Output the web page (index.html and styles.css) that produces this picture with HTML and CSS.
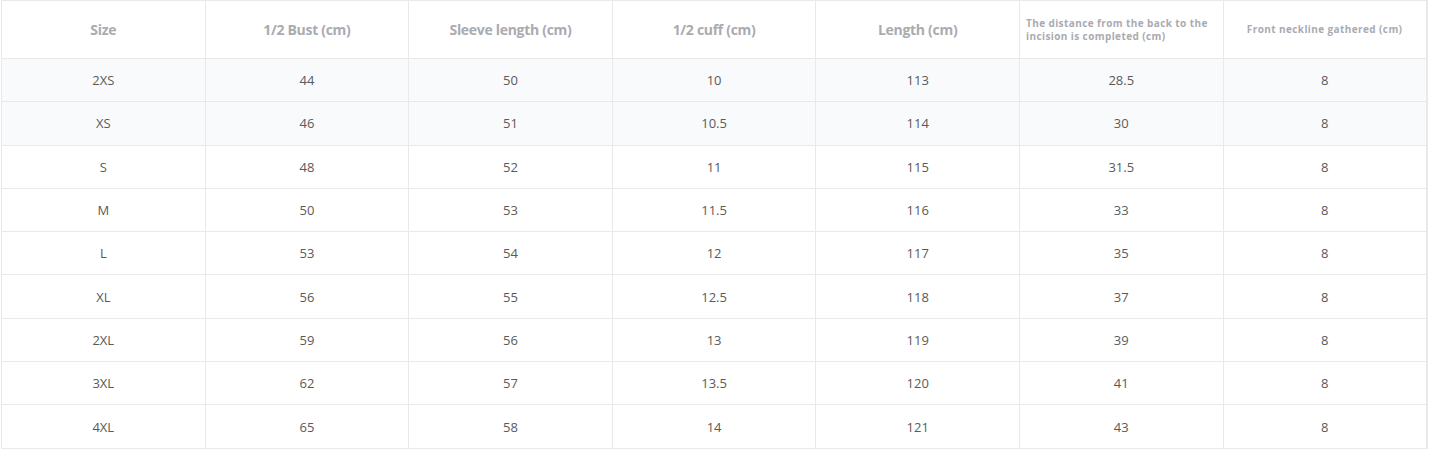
FILE: index.html
```html
<!DOCTYPE html>
<html>
<head>
<meta charset="utf-8">
<link rel="stylesheet" href="styles.css">
</head>
<body>
<table class="size-table">
  <colgroup>
    <col class="c"><col class="c"><col class="c"><col class="c"><col class="c"><col class="c"><col class="c">
  </colgroup>
  <thead>
    <tr>
      <th>Size</th>
      <th>1/2 Bust (cm)</th>
      <th>Sleeve length (cm)</th>
      <th>1/2 cuff (cm)</th>
      <th>Length (cm)</th>
      <th class="small left">The distance from the back to the incision is completed (cm)</th>
      <th class="small">Front neckline gathered (cm)</th>
    </tr>
  </thead>
  <tbody>
    <tr class="shade"><td>2XS</td><td>44</td><td>50</td><td>10</td><td>113</td><td>28.5</td><td>8</td></tr>
    <tr class="shade"><td>XS</td><td>46</td><td>51</td><td>10.5</td><td>114</td><td>30</td><td>8</td></tr>
    <tr><td>S</td><td>48</td><td>52</td><td>11</td><td>115</td><td>31.5</td><td>8</td></tr>
    <tr><td>M</td><td>50</td><td>53</td><td>11.5</td><td>116</td><td>33</td><td>8</td></tr>
    <tr><td>L</td><td>53</td><td>54</td><td>12</td><td>117</td><td>35</td><td>8</td></tr>
    <tr><td>XL</td><td>56</td><td>55</td><td>12.5</td><td>118</td><td>37</td><td>8</td></tr>
    <tr><td>2XL</td><td>59</td><td>56</td><td>13</td><td>119</td><td>39</td><td>8</td></tr>
    <tr><td>3XL</td><td>62</td><td>57</td><td>13.5</td><td>120</td><td>41</td><td>8</td></tr>
    <tr><td>4XL</td><td>65</td><td>58</td><td>14</td><td>121</td><td>43</td><td>8</td></tr>
  </tbody>
</table>
</body>
</html>
```
FILE: styles.css
```css
html, body {
  margin: 0;
  padding: 0;
  background: #ffffff;
}
body {
  padding: 0 0 0 1px;
  font-family: "Open Sans", "Liberation Sans", sans-serif;
}
.size-table {
  border-collapse: collapse;
  table-layout: fixed;
  width: 1426px;
  border-right: 2px solid #e9e9ec;
}
.size-table col.c {
  width: 203.6px;
}
.size-table th,
.size-table td {
  border: 1px solid #e9e9ec;
  text-align: center;
  padding: 0;
}
.size-table th {
  height: 57px;
  font-size: 14px;
  font-weight: 700;
  color: #a9abb1;
  letter-spacing: -0.3px;
}
.size-table th.small {
  font-size: 10px;
  font-weight: 700;
  letter-spacing: 0.4px;
  line-height: 13px;
  padding: 0 6px;
}
.size-table th.left {
  text-align: left;
}
.size-table td {
  height: 42.3px;
  font-size: 13px;
  color: #5a5a5a;
}
.size-table tr.shade td {
  background: #f9fafc;
}
```
